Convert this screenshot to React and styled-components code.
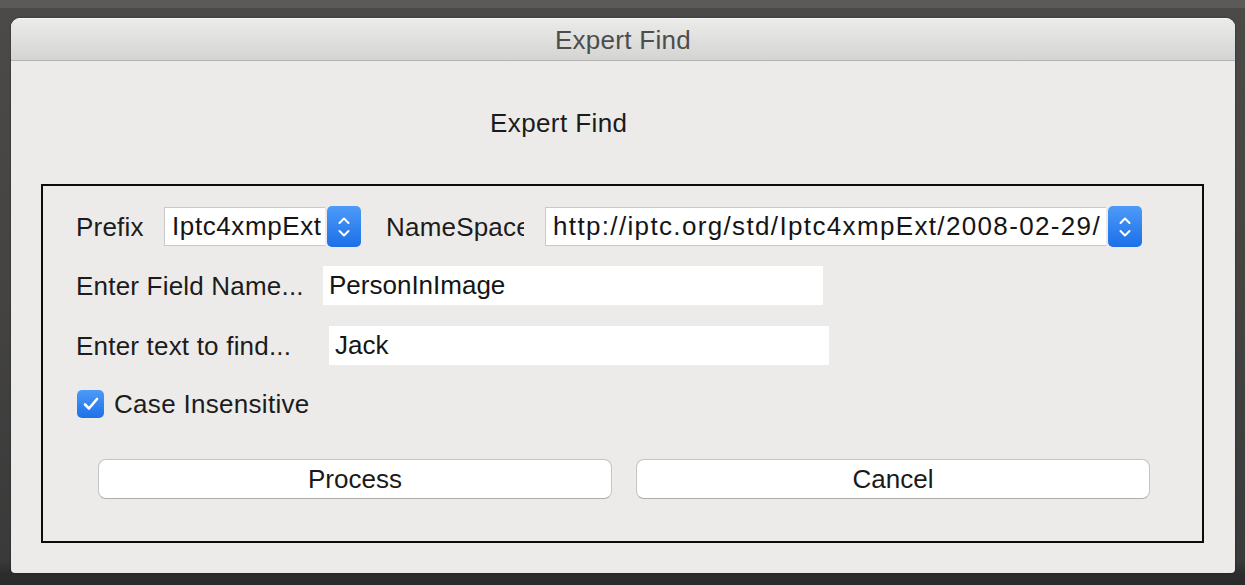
import React from "react";
import styled, { createGlobalStyle } from "styled-components";

const Global = createGlobalStyle`
  html, body { margin: 0; padding: 0; }
  body {
    width: 1245px;
    height: 585px;
    overflow: hidden;
    font-family: "Liberation Sans", Arial, sans-serif;
    background: linear-gradient(to bottom, #5b5a59 0, #5b5a59 8px, #4b4a49 8px, #444342 300px, #3a3a3a 560px, #2c2c2c 574px, #2a2a2a 585px);
  }
  #root { display: block; }
`;

const Window = styled.div`
  margin: 18px 0 0 11px;
  width: 1224px;
  height: 555px;
  background: #ecebe9;
  border-radius: 9px 9px 4px 4px;
  box-shadow: 0 0 2px rgba(0,0,0,0.5);
  display: flex;
  flex-direction: column;
  overflow: hidden;
`;

const TitleBar = styled.div`
  box-sizing: border-box;
  height: 43px;
  flex: 0 0 43px;
  padding-top: 2px;
  border-top: 1px solid #f7f7f7;
  border-bottom: 1px solid #b2b2b2;
  background: linear-gradient(to bottom, #ebebea, #d4d4d3);
  display: flex;
  align-items: center;
  justify-content: center;
  font-size: 26px;
  letter-spacing: 0.3px;
  color: #4d4d4d;
`;

const Content = styled.div`
  flex: 1;
  display: flex;
  flex-direction: column;
  padding: 0 31px 30px 30px;
`;

const Heading = styled.div`
  margin: 47px 0 0 449px;
  height: 30px;
  line-height: 30px;
  font-size: 26px;
  letter-spacing: 0.4px;
  color: #1b1b1b;
`;

const Panel = styled.div`
  margin-top: 46px;
  border: 2px solid #0c0c0c;
  padding: 20px 0 42px 0;
  display: flex;
  flex-direction: column;
`;

const Row = styled.div`
  display: flex;
  align-items: center;
  height: ${(p) => p.$h}px;
  margin-top: ${(p) => p.$mt || 0}px;
  padding-left: 33px;
`;

const Label = styled.div`
  flex: 0 0 ${(p) => p.$w}px;
  width: ${(p) => p.$w}px;
  margin-left: ${(p) => p.$ml || 0}px;
  font-size: 26px;
  letter-spacing: 0.2px;
  color: #1c1c1c;
  white-space: nowrap;
  overflow: hidden;
  line-height: 30px;
`;

const SelectGroup = styled.div`
  display: flex;
  align-items: center;
  gap: 2px;
  margin-left: ${(p) => p.$ml || 0}px;
`;

const SelectBox = styled.div`
  width: ${(p) => p.$w}px;
  height: 39px;
  box-sizing: border-box;
  background: #fff;
  border: 1px solid #c9c9c9;
  border-right: none;
  padding-left: 7px;
  display: flex;
  align-items: center;
  font-size: 26px;
  letter-spacing: ${(p) => p.$ls || 0}px;
  color: #151515;
  white-space: nowrap;
  overflow: hidden;
`;

const Stepper = styled.div`
  width: 34px;
  height: 41px;
  border-radius: 5px;
  background: linear-gradient(to bottom, #4d9bf8, #1c6fe8);
  display: flex;
  align-items: center;
  justify-content: center;
`;

const TextInput = styled.div`
  width: 500px;
  height: 39px;
  box-sizing: border-box;
  background: #fff;
  padding-left: 6px;
  display: flex;
  align-items: center;
  font-size: 26px;
  color: #151515;
  white-space: nowrap;
`;

const CheckBox = styled.div`
  width: 27px;
  height: 28px;
  margin-left: 1px;
  border-radius: 5px;
  background: linear-gradient(to bottom, #4d9bf8, #1d70e8);
  display: flex;
  align-items: center;
  justify-content: center;
`;

const CheckLabel = styled.div`
  margin-left: 10px;
  font-size: 26px;
  letter-spacing: 0.3px;
  color: #1c1c1c;
`;

const ButtonRow = styled.div`
  display: flex;
  gap: 24px;
  margin-top: 41px;
  padding: 0 52px 0 55px;
`;

const Button = styled.div`
  flex: 1;
  height: 40px;
  box-sizing: border-box;
  background: #fff;
  border: 1px solid #c4c4c4;
  border-bottom-color: #adadad;
  border-radius: 8px;
  display: flex;
  align-items: center;
  justify-content: center;
  font-size: 26px;
  color: #1a1a1a;
`;

const Chevrons = () => (
  <svg width="14" height="26" viewBox="0 0 14 26">
    <path d="M2.5 9 L7 4.5 L11.5 9" fill="none" stroke="#fff" strokeWidth="2" strokeLinecap="round" strokeLinejoin="round" />
    <path d="M2.5 17 L7 21.5 L11.5 17" fill="none" stroke="#fff" strokeWidth="2" strokeLinecap="round" strokeLinejoin="round" />
  </svg>
);

const Check = () => (
  <svg width="18" height="16" viewBox="0 0 18 16">
    <path d="M3 8.5 L7 12.5 L15 3" fill="none" stroke="#fff" strokeWidth="2.6" strokeLinecap="round" strokeLinejoin="round" />
  </svg>
);

export default function App() {
  return (
    <>
      <Global />
      <Window>
        <TitleBar>Expert Find</TitleBar>
        <Content>
          <Heading>Expert Find</Heading>
          <Panel>
            <Row $h={41}>
              <Label $w={88}>Prefix</Label>
              <SelectGroup>
                <SelectBox $w={161} $ls={0.6}>Iptc4xmpExt</SelectBox>
                <Stepper><Chevrons /></Stepper>
              </SelectGroup>
              <Label $w={138} $ml={25}>NameSpace</Label>
              <SelectGroup $ml={21}>
                <SelectBox $w={561} $ls={1.35}>http://iptc.org/std/Iptc4xmpExt/2008-02-29/</SelectBox>
                <Stepper><Chevrons /></Stepper>
              </SelectGroup>
            </Row>
            <Row $h={39} $mt={19}>
              <Label $w={247}>Enter Field Name...</Label>
              <TextInput>PersonInImage</TextInput>
            </Row>
            <Row $h={39} $mt={21}>
              <Label $w={253}>Enter text to find...</Label>
              <TextInput>Jack</TextInput>
            </Row>
            <Row $h={28} $mt={25}>
              <CheckBox><Check /></CheckBox>
              <CheckLabel>Case Insensitive</CheckLabel>
            </Row>
            <ButtonRow>
              <Button>Process</Button>
              <Button>Cancel</Button>
            </ButtonRow>
          </Panel>
        </Content>
      </Window>
    </>
  );
}
